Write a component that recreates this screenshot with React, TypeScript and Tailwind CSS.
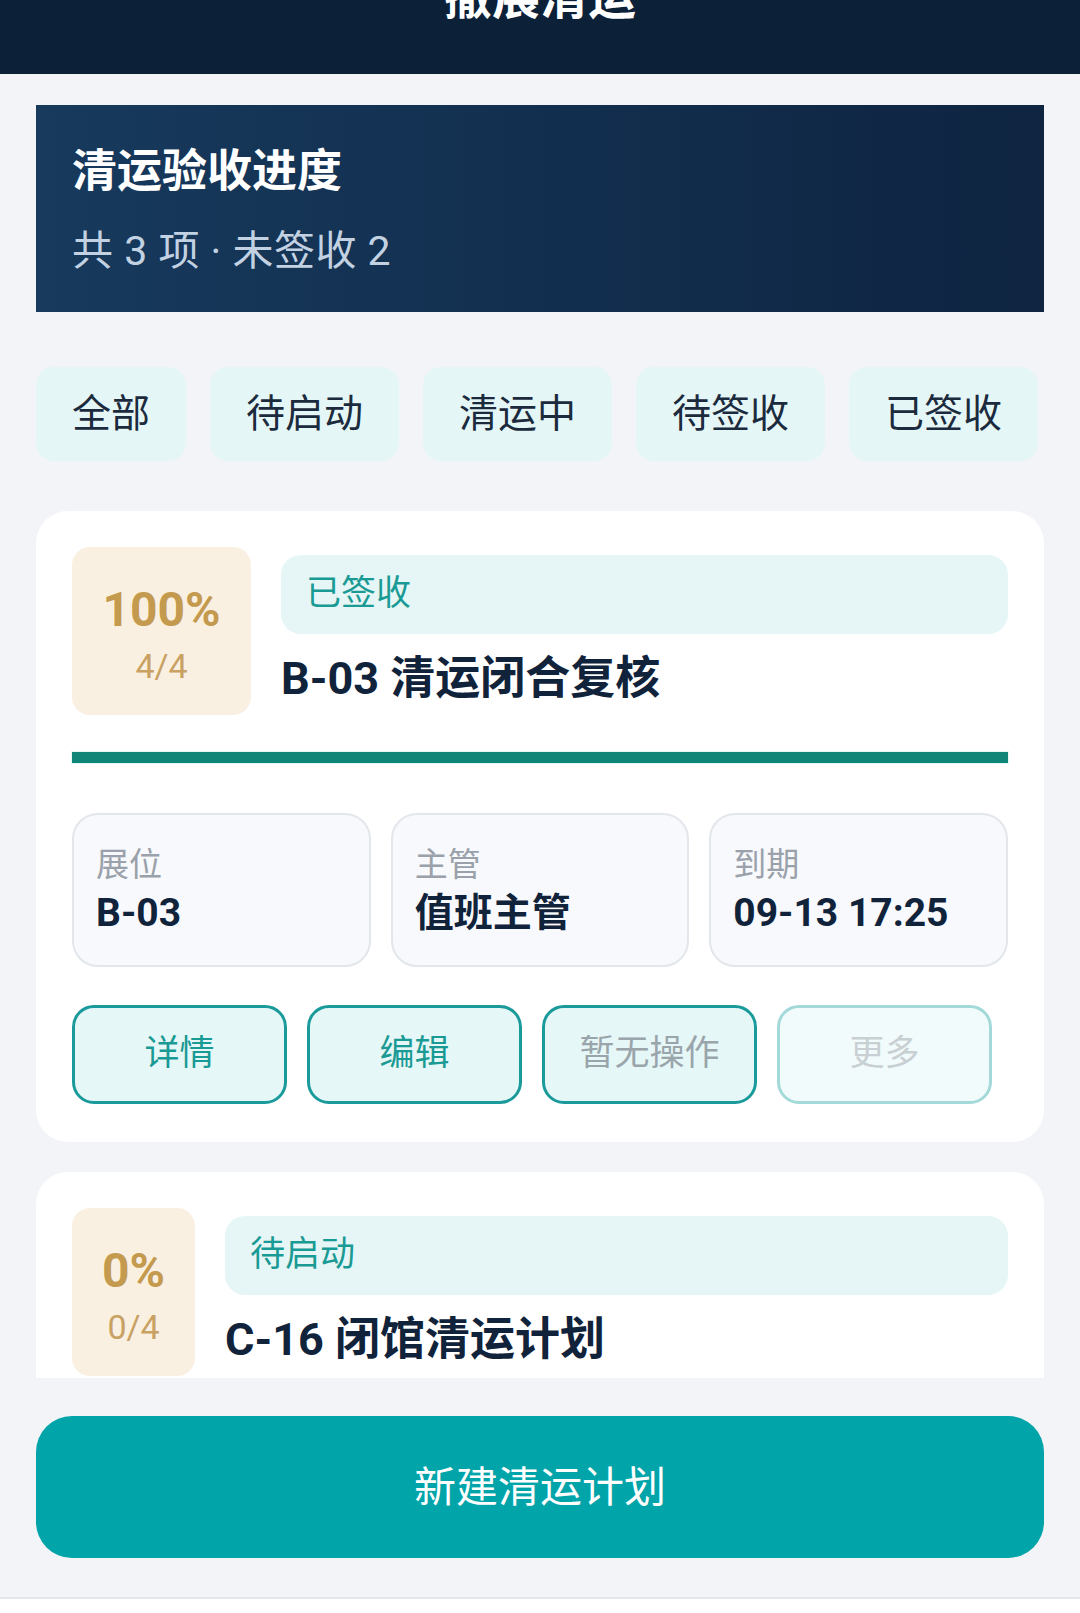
import React from 'react';

const font = { fontFamily: "Roboto, 'Noto Sans CJK SC', 'Noto Sans', sans-serif" };

const tabs = ['全部', '待启动', '清运中', '待签收', '已签收'];

type Plan = {
  percent: string;
  done: string;
  status: string;
  title: string;
  wide: boolean;
};

const plans: Plan[] = [
  { percent: '100%', done: '4/4', status: '已签收', title: 'B-03 清运闭合复核', wide: true },
  { percent: '0%', done: '0/4', status: '待启动', title: 'C-16 闭馆清运计划', wide: false },
];

const InfoBox = ({ label, value }: { label: string; value: string }) => (
  <div className="flex-1 h-[154px] rounded-[26px] border-2 border-[#e3e6eb] bg-[#f7f9fc] px-[22px] pt-[30px]">
    <div className="text-[33px] leading-[40px] text-[#9aa1aa]">{label}</div>
    <div className="mt-[5px] text-[39px] leading-[46px] font-bold text-[#10233a]">{value}</div>
  </div>
);

const PlanCard = ({ plan, full }: { plan: Plan; full: boolean }) => (
  <div className="bg-white rounded-[32px] px-[36px] pt-[36px] pb-[38px]">
    {/* 头部：进度 + 状态 */}
    <div className="flex gap-[30px]">
      <div
        className={`${plan.wide ? 'w-[179px]' : 'w-[123px]'} h-[168px] shrink-0 rounded-[18px] bg-[#faf0e2] flex flex-col items-center justify-center pt-[6px]`}
      >
        <div className="text-[48px] leading-[54px] font-bold text-[#c49a4f]">{plan.percent}</div>
        <div className="mt-[10px] text-[34px] leading-[38px] text-[#c8a163]">{plan.done}</div>
      </div>
      <div className="flex-1 pt-[8px]">
        <div className="h-[79px] rounded-[20px] bg-[#e6f6f6] flex items-center px-[25px] text-[35px] text-[#1a9a94]">
          {plan.status}
        </div>
        <div className="mt-[20px] text-[45px] leading-[50px] font-bold text-[#10233a]">{plan.title}</div>
      </div>
    </div>

    {full && (
      <>
        {/* 进度条 */}
        <div className="mt-[37px] h-[11px] bg-[#0e8577] shadow-[0_0_0_1px_#e6f8f6]" />

        {/* 信息 */}
        <div className="mt-[50px] flex gap-[20px]">
          <InfoBox label="展位" value="B-03" />
          <InfoBox label="主管" value="值班主管" />
          <InfoBox label="到期" value="09-13 17:25" />
        </div>

        {/* 操作按钮 */}
        <div className="mt-[38px] flex gap-[20px]">
          <button className="w-[215px] h-[99px] rounded-[22px] border-[3px] border-[#1a9a9a] bg-[#e6f7f7] text-[35px] text-[#1a9a94]">
            详情
          </button>
          <button className="w-[215px] h-[99px] rounded-[22px] border-[3px] border-[#1a9a9a] bg-[#e6f7f7] text-[35px] text-[#1a9a94]">
            编辑
          </button>
          <button className="w-[215px] h-[99px] rounded-[22px] border-[3px] border-[#1a9a9a] bg-[#e6f7f7] text-[35px] text-[#9aa5ab]">
            暂无操作
          </button>
          <button className="w-[215px] h-[99px] rounded-[22px] border-[3px] border-[#a3d9d9] bg-[#f2fbfb] text-[35px] text-[#c8d0d3]">
            更多
          </button>
        </div>
      </>
    )}
  </div>
);

const App = () => {
  return (
    <div className="w-[1080px] h-[1613px] bg-[#f2f4f8] flex flex-col overflow-hidden" style={font}>
      {/* 顶部标题栏 */}
      <header className="h-[74px] shrink-0 bg-[#0c2138] flex justify-center overflow-hidden">
        <span className="-mt-[26px] text-[48px] leading-none font-bold text-white">撤展清运</span>
      </header>

      {/* 内容 */}
      <main className="flex-1 overflow-hidden px-[36px] pt-[31px]">
        <div className="h-[207px] bg-gradient-to-r from-[#173a5d] to-[#0e2441] px-[36px] pt-[39px]">
          <div className="text-[45px] leading-[56px] font-bold text-white">清运验收进度</div>
          <div className="mt-[27px] text-[41px] leading-[48px] tracking-[0.5px] text-[#c3d2e2]">共 3 项 · 未签收 2</div>
        </div>

        <div className="mt-[55px] flex gap-[24px]">
          {tabs.map((t) => (
            <div
              key={t}
              className="h-[94px] px-[36px] rounded-[18px] bg-[#e5f6f6] flex items-center text-[39px] text-[#1b2b3d]"
            >
              {t}
            </div>
          ))}
        </div>

        <div className="mt-[50px] flex flex-col gap-[30px]">
          {plans.map((p, i) => (
            <PlanCard key={p.title} plan={p} full={i === 0} />
          ))}
        </div>
      </main>

      {/* 底部按钮 */}
      <footer className="shrink-0 px-[36px] pt-[38px] pb-[39px]">
        <button className="w-full h-[142px] rounded-[36px] bg-[#00a4a9] text-[42px] text-white">
          新建清运计划
        </button>
      </footer>
      <div className="h-[16px] shrink-0 border-t-2 border-[#e4e6ea] bg-white" />
    </div>
  );
};

export default App;
